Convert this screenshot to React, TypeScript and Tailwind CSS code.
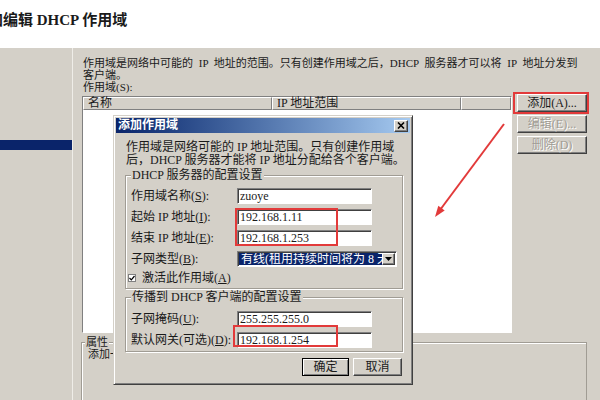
const raised =
  'border border-t-white border-l-white border-r-[#404040] border-b-[#404040] shadow-[inset_-1px_-1px_0_#808080] bg-[#d4d0c8]'
const sunken =
  'border border-t-[#808080] border-l-[#808080] border-r-white border-b-white shadow-[inset_1px_1px_0_#404040] bg-white'

function Field({ value, wide }: { value: string; wide?: boolean }) {
  return (
    <div className={`${sunken} ${wide ? 'w-[160px]' : 'w-[135px]'} h-[16px] pl-[2px] leading-[14px] whitespace-nowrap overflow-hidden`}>
      {value}
    </div>
  )
}

function Row({ label, children }: { label: React.ReactNode; children: React.ReactNode }) {
  return (
    <div className="flex h-[21px] items-center">
      <span className="w-[106px] whitespace-nowrap">{label}</span>
      {children}
    </div>
  )
}

function Group({ title, children }: { title: string; children: React.ReactNode }) {
  return (
    <fieldset className="border border-[#a09c94] shadow-[inset_1px_1px_0_#fff,1px_1px_0_#fff] px-[5px] pt-[3px] pb-[1px]">
      <legend className="px-[1px] leading-[13px] bg-[#d4d0c8] whitespace-nowrap">{title}</legend>
      {children}
    </fieldset>
  )
}

function AddScopeDialog() {
  return (
    <div className="absolute left-[113px] top-[115px] w-[300px] h-[270px] bg-[#d4d0c8] p-[2px] border border-t-[#d4d0c8] border-l-[#d4d0c8] border-r-[#404040] border-b-[#404040] shadow-[inset_1px_1px_0_#fff,inset_-1px_-1px_0_#808080]">
      {/* title bar */}
      <div className="flex h-[15px] items-center justify-between bg-linear-to-r from-[#0a246a] to-[#a6caf0] pl-[2px] pr-[2px]">
        <span className="text-white font-bold leading-[13px]">添加作用域</span>
        <div className={`${raised} flex w-[14px] h-[12px] items-center justify-center`}>
          <svg width="8" height="7" viewBox="0 0 8 7">
            <path d="M1 0.5 L7 6.5 M7 0.5 L1 6.5" stroke="#000" strokeWidth="1.6" />
          </svg>
        </div>
      </div>

      <div className="pl-[9px] pr-[7px] pt-[8px]">
        <p className="pl-[1px] leading-[13px] whitespace-nowrap">
          作用域是网络可能的 IP 地址范围。只有创建作用域
          <br />
          后，DHCP 服务器才能将 IP 地址分配给各个客户端。
        </p>

        <div className="mt-[2px]">
          <Group title="DHCP 服务器的配置设置">
            <Row label={<>作用域名称(<u>S</u>):</>}>
              <Field value="zuoye" />
            </Row>
            <Row label={<>起始 IP 地址(<u>I</u>):</>}>
              <Field value="192.168.1.11" />
            </Row>
            <Row label={<>结束 IP 地址(<u>E</u>):</>}>
              <Field value="192.168.1.253" />
            </Row>
            <Row label={<>子网类型(<u>B</u>):</>}>
              <div className={`${sunken} flex w-[160px] h-[16px] p-[1px]`}>
                <span className="flex-1 min-w-0 overflow-hidden whitespace-nowrap bg-[#0a246a] text-white pl-[2px] leading-[12px]">
                  有线(租用持续时间将为 8 天)
                </span>
                <div className={`${raised} flex w-[13px] items-center justify-center`}>
                  <svg width="7" height="4" viewBox="0 0 7 4">
                    <path d="M0 0 H7 L3.5 4 Z" fill="#000" />
                  </svg>
                </div>
              </div>
            </Row>
            <div className="flex h-[18px] items-center -ml-[3px] gap-[6px]">
              <span className="flex w-[8px] h-[8px] items-center justify-center bg-white border border-[#808080]">
                <svg width="6" height="6" viewBox="0 0 6 6">
                  <path d="M0.5 3 L2.3 4.8 L5.5 1" stroke="#000" strokeWidth="1.2" fill="none" />
                </svg>
              </span>
              <span>激活此作用域(<u>A</u>)</span>
            </div>
          </Group>
        </div>

        <div className="mt-[2px]">
          <Group title="传播到 DHCP 客户端的配置设置">
            <div className="pt-[1px]">
              <Row label={<>子网掩码(<u>U</u>):</>}>
                <Field value="255.255.255.0" />
              </Row>
              <Row label={<>默认网关(可选)(<u>D</u>):</>}>
                <Field value="192.168.1.254" />
              </Row>
            </div>
          </Group>
        </div>

        <div className="mt-[6px] flex justify-end gap-[4px] pr-[1px]">
          <button className="w-[47px] h-[18px] bg-[#d4d0c8] border border-black shadow-[inset_1px_1px_0_#fff,inset_-1px_-1px_0_#808080] leading-[14px]">
            确定
          </button>
          <button className={`${raised} w-[49px] h-[18px] leading-[14px]`}>取消</button>
        </div>
      </div>
    </div>
  )
}

export default function App() {
  return (
    <div className="relative w-[600px] h-[400px] overflow-hidden bg-white text-[12px] leading-[12px] text-[#1a1a1a] font-['Liberation_Serif','Noto_Sans_CJK_SC',serif]">
      {/* page heading */}
      <div className="h-[48px] pt-[12px]">
        <h1 className="-ml-[12px] text-[15px] leading-[16px] font-bold whitespace-nowrap">加编辑 DHCP 作用域</h1>
      </div>

      <div className="flex h-[352px] bg-[#d4d0c8]">
        {/* tree pane */}
        <div className="w-[72px] pt-[92px]">
          <div className="h-[10px] bg-[#0a246a]" />
        </div>
        <div className="w-px bg-[#efede8]" />

        {/* scope pane */}
        <div className="flex-1 min-w-0 overflow-hidden pl-[9px] pt-[9px]">
          <p className="pl-[1px] text-[11px] leading-[12px] whitespace-nowrap [word-spacing:3px]">
            作用域是网络中可能的 IP 地址的范围。只有创建作用域之后，DHCP 服务器才可以将 IP 地址分发到
            <br />
            客户端。
            <br />
            作用域(S):
          </p>

          <div className="mt-[3px] flex gap-[5px]">
            <div className="w-[430px] h-[237px] bg-white border border-t-[#808080] border-l-[#808080] border-r-white border-b-white">
              <div className="flex h-[13px] leading-[11px]">
                <div className="w-[189px] pl-[4px] bg-[#d4d0c8] border border-t-white border-l-white border-r-[#808080] border-b-[#808080]">名称</div>
                <div className="w-[189px] pl-[4px] bg-[#d4d0c8] border border-t-white border-l-white border-r-[#808080] border-b-[#808080]">IP 地址范围</div>
                <div className="flex-1 bg-[#d4d0c8] border border-t-white border-l-white border-r-[#808080] border-b-[#808080]" />
              </div>
            </div>

            <div className="-mt-[2px] flex w-[70px] flex-col gap-[3px]">
              <button className={`${raised} h-[18px] leading-[14px]`}>添加(A)...</button>
              <button className={`${raised} h-[18px] leading-[14px] text-[#a09c94] [text-shadow:1px_1px_0_#fff]`}>编辑(E)...</button>
              <button className={`${raised} h-[18px] leading-[14px] text-[#a09c94] [text-shadow:1px_1px_0_#fff]`}>删除(D)</button>
            </div>
          </div>

          <fieldset className="-ml-[1px] mt-[4px] w-[506px] h-[70px] border border-[#a09c94] shadow-[inset_1px_1px_0_#fff] pl-[6px] text-[11px]">
            <legend className="-ml-[3px] px-[1px] leading-[11px] bg-[#d4d0c8]">属性</legend>
            <p className="mt-[1px] leading-[11px] whitespace-nowrap">添加一个新作用域。</p>
          </fieldset>
        </div>
      </div>

      <AddScopeDialog />

      {/* red annotations */}
      <div className="absolute left-[513px] top-[92px] w-[76px] h-[22px] border-2 border-[#e23a3a]" />
      <div className="absolute left-[235px] top-[208px] w-[103px] h-[38px] border-2 border-[#e23a3a]" />
      <div className="absolute left-[233px] top-[325px] w-[105px] h-[22px] border-2 border-[#e23a3a]" />
      <svg className="absolute inset-0 pointer-events-none" width="600" height="400" viewBox="0 0 600 400">
        <line x1="504" y1="124" x2="440" y2="210" stroke="#e23a3a" strokeWidth="2" />
        <polygon points="435,217 444.7,210.6 438.3,205.8" fill="#e23a3a" />
      </svg>
    </div>
  )
}
